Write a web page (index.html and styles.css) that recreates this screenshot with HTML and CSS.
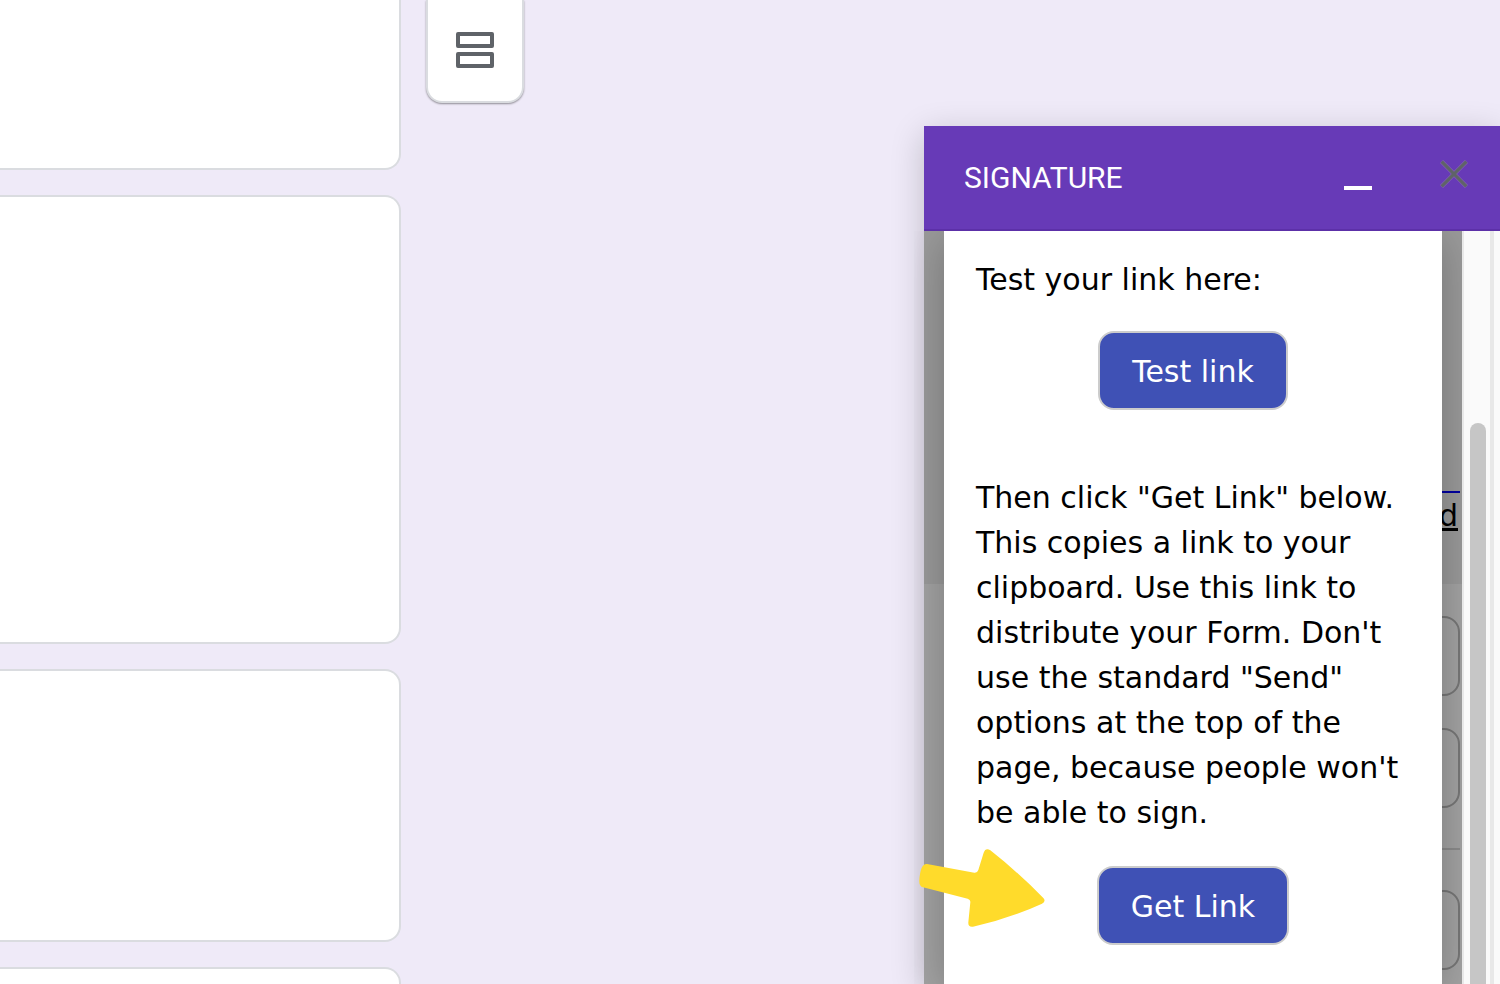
FILE: index.html
```
<!DOCTYPE html>
<html lang="en">
<head>
    <meta charset="UTF-8">
    <meta name="viewport" content="width=device-width, initial-scale=1.0">
    <title>Signature</title>
    <link rel="stylesheet" href="styles.css">
</head>
<body>
    <div class="workspace">
        <main class="form-cards">
            <section class="card card-first"></section>
            <section class="card card-tall"></section>
            <section class="card card-medium"></section>
            <section class="card card-medium"></section>
        </main>

        <div class="toolbar">
            <button class="tool-button" type="button" aria-label="Add section">
                <svg width="38" height="36" viewBox="0 0 38 36" fill="none" stroke="#5f6368" stroke-width="4" stroke-linejoin="round">
                    <rect x="2" y="2" width="34" height="12"/>
                    <rect x="2" y="22" width="34" height="12"/>
                </svg>
            </button>
        </div>

        <aside class="dialog">
            <header class="dialog-header">
                <h1>SIGNATURE</h1>
                <button class="icon-button" type="button" aria-label="Minimize">
                    <svg width="28" height="32" viewBox="0 0 28 32"><rect y="28" width="28" height="4" fill="#fff"/></svg>
                </button>
                <button class="icon-button" type="button" aria-label="Close">
                    <svg width="28" height="28" viewBox="0 0 28 28" fill="none" stroke="#5f6368" stroke-width="3.6"><path d="M1.5 1.5l25 25M26.5 1.5l-25 25" stroke="#8363b4" stroke-width="4.4"/><path d="M1.7 1.7l24.6 24.6M26.3 1.7l-24.6 24.6" stroke-width="3.2"/></svg>
                </button>
            </header>

            <div class="dialog-body">
                <div class="backdrop">
                    <div class="settings">
                        <div class="settings-intro">
                            <div class="link-line"></div>
                            <span class="link-text">d</span>
                        </div>
                        <div class="settings-fields">
                            <div class="field"></div>
                            <div class="field"></div>
                            <hr>
                            <div class="field"></div>
                        </div>
                    </div>

                    <div class="sheet">
                        <p>Test your link here:</p>
                        <div class="action">
                            <button class="button" type="button">Test link</button>
                        </div>
                        <p class="instructions">Then click "Get Link" below. This copies a link to your clipboard. Use this link to distribute your Form. Don't use the standard "Send" options at the top of the page, because people won't be able to sign.</p>
                        <div class="action">
                            <svg class="arrow" viewBox="57 87 376 234" fill="#ffdb2b">
                                <path d="M80 132L222 158Q231 159 234 150L250 98Q256 82 270 91Q354 157 429 234Q438 243 425 251Q322 298 218 320Q203 322 204 307L210 247Q211 239 202 236L68 202Q56 199 57 181Q60 130 80 132Z"/>
                            </svg>
                            <button class="button" type="button">Get Link</button>
                        </div>
                    </div>
                </div>
                <div class="scrollbar">
                    <div class="thumb"></div>
                </div>
                <div class="gutter"></div>
            </div>
        </aside>
    </div>
</body>
</html>
```
FILE: styles.css
```
:root {
    --bg: #efeaf8;
    --header: #673ab7;
    --primary: #3f51b5;
    --border: #dadce0;
}

* {
    margin: 0;
    padding: 0;
    box-sizing: border-box;
}

body {
    background: var(--bg);
    color: #000;
    font-family: Verdana, "DejaVu Sans", sans-serif;
    font-size: 30px;
    line-height: 45px;
    overflow: hidden;
}

button {
    font: inherit;
    border: none;
    background: none;
    cursor: pointer;
}

.workspace {
    display: flex;
    align-items: flex-start;
    height: 100vh;
    overflow: hidden;
}

/* Form */
.form-cards {
    flex: 0 1 401px;
    display: flex;
    flex-direction: column;
    gap: 25px;
}

.card {
    background: #fff;
    border: 2px solid var(--border);
    border-left: none;
    border-radius: 0 16px 16px 0;
}

.card-first {
    min-height: 170px;
    border-top: none;
    border-top-right-radius: 0;
}

.card-tall {
    min-height: 449px;
}

.card-medium {
    min-height: 273px;
}

.toolbar {
    margin-left: 25px;
    padding: 32px 28px 33px;
    background: #fff;
    border: 2px solid var(--border);
    border-top: none;
    border-radius: 0 0 16px 16px;
    box-shadow: 0 1px 2px rgba(0,0,0,0.4);
}

.tool-button,
.tool-button svg {
    display: block;
}

/* Dialog */
.dialog {
    flex: 0 0 576px;
    align-self: stretch;
    display: flex;
    flex-direction: column;
    margin: 126px 0 0 auto;
    box-shadow: 0 8px 32px rgba(0,0,0,0.2);
}

.dialog-header {
    position: relative;
    z-index: 1;
    display: flex;
    align-items: center;
    gap: 68px;
    height: 105px;
    padding: 0 32px 0 40px;
    background: var(--header);
    border-bottom: 2px solid #5c30a8;
}

.dialog-header h1 {
    margin-right: auto;
    color: #fff;
    font-family: Roboto, sans-serif;
    font-size: 30px;
    font-weight: 400;
}

.icon-button {
    padding-bottom: 8px;
}

.icon-button svg {
    display: block;
}

.dialog-body {
    flex: 1;
    display: flex;
    min-height: 0;
}

.backdrop {
    position: relative;
    flex: 1;
    display: flex;
    padding: 0 20px;
    background: #a3a3a3;
}

.settings {
    position: absolute;
    inset: 0;
    overflow: hidden;
}

.settings-intro {
    height: 353px;
    padding: 260px 2px 0 32px;
    background: #9a9a9a;
    text-align: right;
}

.link-line {
    height: 2px;
    background: #0000a0;
}

.link-text {
    display: block;
    padding-right: 2px;
    text-decoration: underline;
}

.settings-fields {
    display: flex;
    flex-direction: column;
    gap: 32px;
    padding: 32px 2px 0 32px;
}

.field {
    height: 80px;
    border: 2px solid #777;
    border-radius: 16px;
}

.settings hr {
    margin: 8px 0;
    border: none;
    border-top: 2px solid #8b8b8b;
}

.sheet {
    position: relative;
    flex: 1;
    padding: 26px 32px 0;
    background: #fff;
    box-shadow: 0 8px 40px rgba(0,0,0,0.25);
    clip-path: inset(0 -20px 0 -30px);
}

.action {
    position: relative;
    display: flex;
    justify-content: center;
    margin-top: 29px;
}

.instructions {
    margin-top: 65px;
    margin-bottom: 31px;
}

.button {
    padding: 16px 32px 14px;
    background: var(--primary);
    border: 2px solid #ccc;
    border-radius: 16px;
    color: #fff;
}

.arrow {
    position: absolute;
    left: -57px;
    top: -17px;
    width: 126px;
    height: 78px;
}

.scrollbar {
    flex: 0 0 28px;
    padding: 192px 4px 0 6px;
    display: flex;
    background: #fafafa;
    border-left: 2px solid #e8e8e8;
}

.thumb {
    width: 16px;
    background: #c6c6c6;
    border-radius: 8px 8px 0 0;
}

.gutter {
    flex: 0 0 10px;
    background: #fafafa;
    border-left: 4px solid #e8e8e8;
}
```
